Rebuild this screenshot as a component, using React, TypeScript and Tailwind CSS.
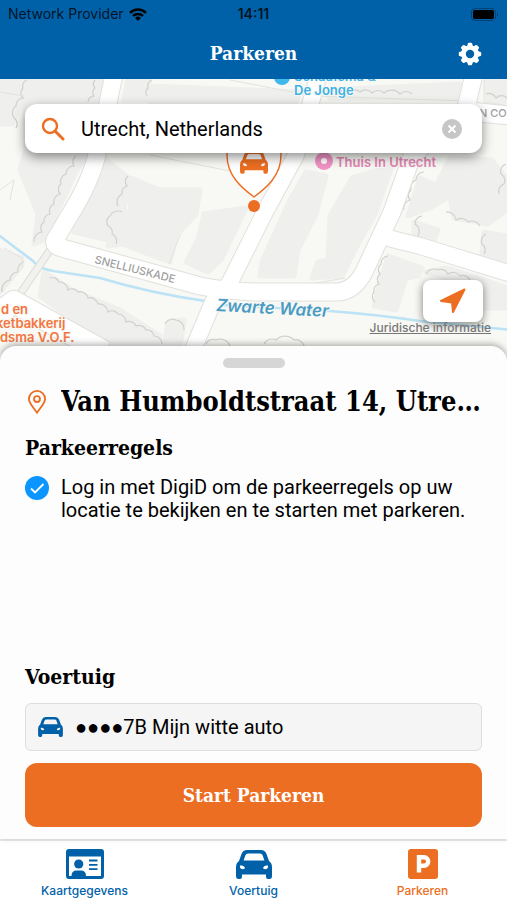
import type { ReactNode } from 'react';
import { useState } from 'react';

type Point = [number, number];

const roads: Array<{ d: string; width: number }> = [
  { d: 'M115 70 L98 150 Q92 180 68 218 L55 240 Q53 246 62 248 L200 286 Q230 292 262 292 L338 292 Q354 291 364 272 L392 212 L412 156 L466 108 L475 70', width: 17 },
  { d: 'M192 352 L213 302 L229 284 L265 212 L296 155 L320 70', width: 16 },
  { d: 'M388 238 L420 246 L515 275', width: 16 },
  { d: 'M474 112 L515 116', width: 18 },
  { d: 'M-8 318 L14 302 L104 352', width: 22 },
];

const river = [
  'M-4 233 L33 261 Q40 270 60 272 L100 278 Q150 293 205 301',
  'M222 305 L330 311 Q380 315 420 321 L512 330',
];

const parcels = [
  'M230 80 L313 96 L465 101',
  'M150 155 L235 172',
  'M0 92 L24 96',
  'M180 235 L169 264',
  'M484 80 L484 102 L510 106',
  'M240 285 L300 286 L345 278',
  'M4 248 L22 258 L22 268',
  'M0 190 L14 180 L10 200',
];

const buildings = [
  'M0 79 H22 L24 96 L12 124 L0 124 Z',
  'M24 79 H105 L90 150 L76 172 L58 210 L44 240 L34 244 L38 214 L20 170 L26 150 Z',
  'M128 79 H150 L146 100 H124 Z',
  'M150 86 L300 92 L296 102 H150 Z',
  'M106 160 L126 176 L124 214 L108 240 L74 232 L84 206 Z',
  'M126 176 L160 190 L200 190 L196 214 L176 236 L170 262 L122 244 L108 246 L114 220 L132 210 L128 196 Z',
  'M204 214 L246 208 L222 258 L208 272 L186 262 L198 240 Z',
  'M44 272 L72 290 L120 310 L160 336 L160 348 H112 L40 296 Z',
  'M168 322 L184 320 L180 348 H164 Z',
  'M0 250 L22 258 L22 266 L0 292 Z',
  'M288 204 L306 172 L326 176 L316 214 L298 250 L294 276 H260 L262 262 Z',
  'M330 216 L352 178 L392 166 L376 212 L356 248 L342 276 L312 278 L318 262 L328 260 Z',
  'M325 90 L460 84 L462 98 L330 98 Z',
  'M486 79 H507 V102 H488 Z',
  'M420 178 L436 186 L450 158 L492 160 L507 180 V210 L488 224 L454 218 L450 196 L430 208 L408 216 Z',
  'M414 222 L438 230 L434 240 L414 236 Z',
  'M484 232 L507 236 V260 L482 254 Z',
  'M388 256 L422 268 L418 276 L406 278 L396 310 L374 306 L378 290 Z',
  'M426 272 L446 268 L490 282 L507 288 V308 H486 V290 Z',
];

const outlines: Point[][] = [
  [[27, 80], [23, 88], [23, 98], [16, 106], [14, 118], [16, 128]],
  [[95, 80], [95, 88], [94, 96], [88, 102]],
  [[76, 156], [74, 166], [66, 174], [61, 184], [60, 194], [54, 204], [50, 214], [44, 222], [42, 232], [34, 242]],
  [[128, 176], [127, 186], [122, 194], [118, 206]],
  [[122, 212], [110, 216], [108, 226], [112, 234], [116, 244]],
  [[152, 80], [148, 88], [147, 96]],
  [[50, 278], [59, 282], [68, 290], [78, 292], [88, 298], [98, 304], [108, 312], [118, 314], [126, 322], [136, 326], [146, 330], [154, 336], [162, 344]],
  [[165, 324], [176, 320], [184, 330]],
  [[24, 262], [18, 272], [10, 280], [2, 292]],
  [[388, 256], [381, 264], [380, 274], [379, 284], [374, 292], [375, 302]],
  [[424, 172], [416, 180], [411, 190], [410, 200], [404, 210]],
  [[426, 274], [438, 270], [448, 274], [460, 276], [470, 280]],
  [[446, 212], [456, 220], [468, 222], [480, 226]],
  [[422, 216], [415, 224], [418, 236]],
  [[486, 234], [482, 244], [484, 254]],
  [[506, 164], [501, 174], [504, 184], [499, 194]],
  [[340, 92], [350, 92], [360, 92], [372, 93], [384, 93], [400, 94], [412, 94]],
  [[486, 94], [496, 98], [507, 98]],
  [[206, 344], [216, 340], [230, 346]],
  [[264, 344], [276, 340], [294, 340], [304, 346]],
];

// Joins the points with small arcs, which gives the bumpy tree and wall edges.
function bumpyPath(points: Point[]) {
  return points
    .map(([x, y], index) => {
      if (index === 0) {
        return `M${x} ${y}`;
      }
      const [px, py] = points[index - 1];
      const r = Math.hypot(x - px, y - py) * 0.7;
      const sweep = y > py && x <= px + 1 ? 0 : 1;
      return `A${r} ${r} 0 0 ${sweep} ${x} ${y}`;
    })
    .join(' ');
}

interface CarIconProps {
  className?: string;
  x?: number;
  y?: number;
  width?: number;
  height?: number;
}

function CarIcon(props: CarIconProps) {
  return (
    <svg viewBox="0 0 36 29" aria-hidden="true" {...props}>
      <path
        fill="currentColor"
        fillRule="evenodd"
        d="M11 0 H25 Q29 0 30.500 4 L33 11 Q36 13 36 17 V26 Q36 29 33.500 29 H32 Q30 29 30 26.500 V24.500 H6 V26.500 Q6 29 4 29 H2.500 Q0 29 0 26 V17 Q0 13 3 11 L5.500 4 Q7 0 11 0 Z M12 3.600 Q10 3.600 9.300 5.400 L7.600 10.400 H28.400 L26.700 5.400 Q26 3.600 24 3.600 Z M4 15.600 Q3.400 18.800 7 19.200 Q9.200 19.200 8.800 17.600 Q7.500 14.800 4 15.600 Z M32 15.600 Q28.500 14.800 27.200 17.600 Q26.800 19.200 29 19.200 Q32.600 18.800 32 15.600 Z"
      />
    </svg>
  );
}

function CityMap() {
  return (
    <svg
      viewBox="0 79 507 275"
      preserveAspectRatio="xMidYMin slice"
      className="block h-full w-full"
      fontFamily="Inter, sans-serif"
      role="img"
      aria-label="Kaart van Utrecht"
    >
      <rect x="-10" y="70" width="530" height="300" fill="#f8f8f4" />
      <g fill="#efefee" stroke="#efefee" strokeWidth="5" strokeLinejoin="round">
        {buildings.map((d) => (
          <path key={d} d={d} />
        ))}
      </g>
      <g fill="none" stroke="#d0d0cd" strokeWidth="1.2">
        {outlines.map((points) => (
          <path key={points.join()} d={bumpyPath(points)} />
        ))}
      </g>
      <g fill="none" stroke="#e2e2de">
        {parcels.map((d) => (
          <path key={d} d={d} />
        ))}
      </g>
      <g fill="none" stroke="#bbe3f5" strokeWidth="2.6">
        {river.map((d) => (
          <path key={d} d={d} />
        ))}
      </g>
      <path d="M50 250 L20 294" fill="none" stroke="#dcdcd8" strokeWidth="8" />
      <path d="M50 250 L20 294" fill="none" stroke="#f1f1ee" strokeWidth="6" />
      <g fill="none" stroke="#e0e0dd" strokeLinejoin="round">
        {roads.map((road) => (
          <path key={road.d} d={road.d} strokeWidth={road.width + 2} />
        ))}
      </g>
      <g fill="none" stroke="#ffffff" strokeLinejoin="round">
        {roads.map((road) => (
          <path key={road.d} d={road.d} strokeWidth={road.width} />
        ))}
      </g>

      <g fontSize="11" fontWeight="500" fill="#a0a0a0">
        <text x="94" y="263" transform="rotate(14 94 263)">
          SNELLIUSKADE
        </text>
        <text x="479" y="117">N CO</text>
      </g>
      <text
        x="216"
        y="311"
        transform="rotate(3 216 311)"
        fontSize="17"
        fontWeight="600"
        fontStyle="italic"
        fill="#4a9bc4"
        stroke="#f8f8f4"
        strokeWidth="2"
        paintOrder="stroke"
      >
        Zwarte Water
      </text>

      <g fontSize="13" fontWeight="600" stroke="#f8f8f4" strokeWidth="2" paintOrder="stroke">
        <circle cx="282" cy="77" r="8" fill="#3db9ec" stroke="none" />
        <g fill="#3db2e6">
          <text x="294" y="81">Schaafsma &amp;</text>
          <text x="294" y="95">De Jonge</text>
        </g>
        <circle cx="324" cy="161" r="9" fill="#f193c4" stroke="none" />
        <circle cx="324" cy="161" r="3" fill="#ffffff" stroke="none" />
        <text x="336" y="167" fill="#e585b3">Thuis In Utrecht</text>
        <g fill="#f4763f">
          <text x="1" y="314">d en</text>
          <text x="-4" y="328">ketbakkerij</text>
          <text x="0" y="342">dsma V.O.F.</text>
        </g>
      </g>

      <path
        d="M254 197 C242 188 227 176 227 155 A27 27 0 0 1 281 155 C281 176 266 188 254 197 Z"
        fill="#ffffff"
        stroke="#ec6e22"
        strokeWidth="1.4"
      />
      <g color="#ec6e22">
        <CarIcon x={240} y={151} width={28} height={23} />
      </g>
      <circle cx="254" cy="206" r="6" fill="#ec6e22" />
    </svg>
  );
}

function StatusBar() {
  return (
    <div className="grid h-7 grid-cols-3 items-center px-2 font-[Inter,sans-serif] text-sm text-black/80">
      <div className="flex items-center gap-1 whitespace-nowrap">
        <span>Network Provider</span>
        <svg viewBox="0 0 20 14" className="h-[13px] w-5 shrink-0 text-black" aria-hidden="true">
          <g fill="none" stroke="currentColor" strokeWidth="2.7">
            <path d="M1.4 5.2 A12.2 12.2 0 0 1 18.6 5.2" />
            <path d="M4.6 8.6 A7.6 7.6 0 0 1 15.4 8.6" />
          </g>
          <path d="M10 14 L6.9 10.8 A4.4 4.4 0 0 1 13.1 10.8 Z" fill="currentColor" />
        </svg>
      </div>
      <span className="text-center font-semibold">14:11</span>
      <svg viewBox="0 0 28 13" className="h-[13px] w-7 justify-self-end" aria-hidden="true">
        <rect x="0.5" y="0.5" width="24" height="12" rx="3.5" fill="none" stroke="#000" strokeOpacity="0.3" />
        <rect x="2" y="2" width="21" height="9" rx="2" fill="#000" />
        <path d="M26 4.5 Q28 6.5 26 8.5 Z" fill="#000" fillOpacity="0.4" />
      </svg>
    </div>
  );
}

const toothAngles = [0, 45, 90, 135];

function GearIcon() {
  return (
    <svg viewBox="0 0 24 24" className="size-6" aria-hidden="true">
      <circle cx="12" cy="12" r="6.500" fill="none" stroke="currentColor" strokeWidth="4.600" />
      {toothAngles.map((angle) => (
        <g key={angle} transform={`rotate(${angle} 12 12)`} fill="currentColor">
          <path d="M9 4.500 L9.900 1.400 Q10.100 0.800 10.800 0.800 H13.200 Q13.900 0.800 14.100 1.400 L15 4.500 Z" />
          <path d="M9 19.500 L9.900 22.600 Q10.100 23.200 10.800 23.200 H13.200 Q13.900 23.200 14.100 22.600 L15 19.500 Z" />
        </g>
      ))}
    </svg>
  );
}

function IdCardIcon() {
  return (
    <svg viewBox="0 0 38 30" className="h-[30px] w-[38px]" aria-hidden="true">
      <path
        fill="currentColor"
        fillRule="evenodd"
        d="M3 0 H35 Q38 0 38 3 V27 Q38 30 35 30 H3 Q0 30 0 27 V3 Q0 0 3 0 Z M3 7.500 V27 H5.500 Q5.500 21.500 10.500 21.500 H15 Q20 21.500 20 27 H35 V7.500 Z"
      />
      <circle cx="12.700" cy="15" r="4.600" fill="currentColor" />
      <path d="M23 11.500 H31.500 M23 15.800 H31.500 M23 20.100 H31.500" stroke="currentColor" strokeWidth="1.800" />
    </svg>
  );
}

function ParkingIcon() {
  return (
    <svg viewBox="0 0 30 30" className="size-[30px]" aria-hidden="true">
      <rect width="30" height="30" rx="3" fill="currentColor" />
      <path d="M11 23.500 V8.300 H16 A4.200 4.200 0 0 1 16 16.700 H11" fill="none" stroke="#fff" strokeWidth="4.400" />
    </svg>
  );
}

interface TabProps {
  label: string;
  icon: ReactNode;
  active?: boolean;
}

function Tab({ label, icon, active }: TabProps) {
  return (
    <a
      href="#"
      aria-current={active ? 'page' : undefined}
      className={`flex flex-1 flex-col items-center gap-1 pt-2 ${active ? 'text-[#ec6e22]' : 'text-[#0061a9]'}`}
    >
      <span className="flex h-[30px] items-center">{icon}</span>
      <span className="font-[Inter,sans-serif] text-xs leading-4 font-medium">{label}</span>
    </a>
  );
}

export default function App() {
  const [query, setQuery] = useState('Utrecht, Netherlands');

  return (
    <div className="flex min-h-screen flex-col bg-[#fdfdfd] font-[Roboto,sans-serif] text-black">
      <header className="bg-[#0061a9]">
        <StatusBar />
        <div className="grid h-[51px] grid-cols-3 items-center px-[25px]">
          <h1 className="col-start-2 text-center font-['Roboto_Slab','DejaVu_Serif_Condensed',serif] text-[19px] font-bold text-white">
            Parkeren
          </h1>
          <button type="button" aria-label="Instellingen" className="justify-self-end text-white">
            <GearIcon />
          </button>
        </div>
      </header>

      <section className="relative h-[275px] overflow-hidden">
        <CityMap />
        <form
          onSubmit={(event) => event.preventDefault()}
          className="absolute inset-x-[25px] top-[25px] flex h-[49px] items-center rounded-xl bg-white pr-5 pl-4 shadow-[0_4px_12px_rgba(0,0,0,0.45)]"
        >
          <svg viewBox="0 0 24 24" className="size-6 shrink-0 text-[#ec6e22]" aria-hidden="true">
            <circle cx="9" cy="9" r="7" fill="none" stroke="currentColor" strokeWidth="2.4" />
            <path d="M14 14 L22 22" stroke="currentColor" strokeWidth="3" strokeLinecap="round" />
          </svg>
          <input
            type="text"
            aria-label="Zoek locatie"
            value={query}
            onChange={(event) => setQuery(event.target.value)}
            className="ml-4 min-w-0 flex-1 text-xl outline-none"
          />
          <button type="button" aria-label="Wissen" onClick={() => setQuery('')}>
            <svg viewBox="0 0 20 20" className="size-5" aria-hidden="true">
              <circle cx="10" cy="10" r="10" fill="#c6c6c6" />
              <path d="M6.500 6.500 L13.500 13.500 M13.500 6.500 L6.500 13.500" stroke="#fff" strokeWidth="2" />
            </svg>
          </button>
        </form>
        <div className="absolute right-4 bottom-5 flex flex-col items-end">
          <button
            type="button"
            aria-label="Mijn locatie"
            className="mr-2 flex h-[42px] w-[60px] items-center justify-center rounded-lg bg-white text-[#ec6e22] shadow-[0_2px_8px_rgba(0,0,0,0.5)]"
          >
            <svg viewBox="0 0 28 28" className="size-7" aria-hidden="true">
              <path
                d="M25.500 2.500 L14 25 L13 15.500 L2 14 Z"
                fill="currentColor"
                stroke="currentColor"
                strokeWidth="2"
                strokeLinejoin="round"
              />
            </svg>
          </button>
          <a href="#" className="font-[Inter,sans-serif] text-xs leading-3 font-medium text-[#777] underline">
            Juridische informatie
          </a>
        </div>
      </section>

      <main className="relative -mt-2 flex flex-1 flex-col rounded-t-2xl bg-[#fdfdfd] px-[25px] pb-3 shadow-[0_-2px_6px_rgba(0,0,0,0.3)]">
        <div className="mt-3 h-[10px] w-[62px] self-center rounded-full bg-[#d6d6d6]" />
        <div className="mt-4 flex items-center gap-3">
          <svg viewBox="0 0 20 26" className="h-6 w-6 shrink-0 text-[#ec6e22]" fill="none" stroke="currentColor" strokeWidth="2" aria-hidden="true">
            <path d="M10 24.500 C7 20.500 1.200 14 1.200 9.800 A8.800 8.800 0 0 1 18.800 9.800 C18.800 14 13 20.500 10 24.500 Z" />
            <circle cx="10" cy="9.800" r="3.200" />
          </svg>
          <h2 className="truncate font-['Roboto_Slab','DejaVu_Serif_Condensed',serif] text-[27px] leading-9 font-bold">
            Van Humboldtstraat 14, Utrecht
          </h2>
        </div>
        <h3 className="mt-3.5 font-['Roboto_Slab','DejaVu_Serif_Condensed',serif] text-[21px] leading-7 font-bold">Parkeerregels</h3>
        <div className="mt-3.5 flex gap-3">
          <svg viewBox="0 0 24 24" className="size-6 shrink-0" aria-hidden="true">
            <circle cx="12" cy="12" r="12" fill="#0a95ff" />
            <path d="M6 12.500 L10 16.500 L18.500 8" fill="none" stroke="#fff" strokeWidth="1.800" />
          </svg>
          <p className="text-xl leading-[23px]">
            Log in met DigiD om de parkeerregels op uw locatie te bekijken en te starten met parkeren.
          </p>
        </div>

        <h3 className="mt-auto font-['Roboto_Slab','DejaVu_Serif_Condensed',serif] text-[21px] leading-7 font-bold">Voertuig</h3>
        <button
          type="button"
          className="mt-3 flex h-12 items-center gap-3 rounded-md border border-[#dedede] bg-[#f5f5f5] px-3 text-left text-xl"
        >
          <CarIcon className="h-5 w-[25px] text-[#0061a9]" />
          <span>●●●●7B Mijn witte auto</span>
        </button>
        <button
          type="button"
          className="mt-3 h-16 rounded-xl bg-[#ec6e22] font-['Roboto_Slab','DejaVu_Serif_Condensed',serif] text-[19px] font-bold text-white"
        >
          Start Parkeren
        </button>
      </main>

      <nav className="flex h-[61px] border-t-2 border-[#ebebeb] bg-white">
        <Tab label="Kaartgegevens" icon={<IdCardIcon />} />
        <Tab label="Voertuig" icon={<CarIcon className="h-[29px] w-9" />} />
        <Tab label="Parkeren" icon={<ParkingIcon />} active />
      </nav>
    </div>
  );
}
